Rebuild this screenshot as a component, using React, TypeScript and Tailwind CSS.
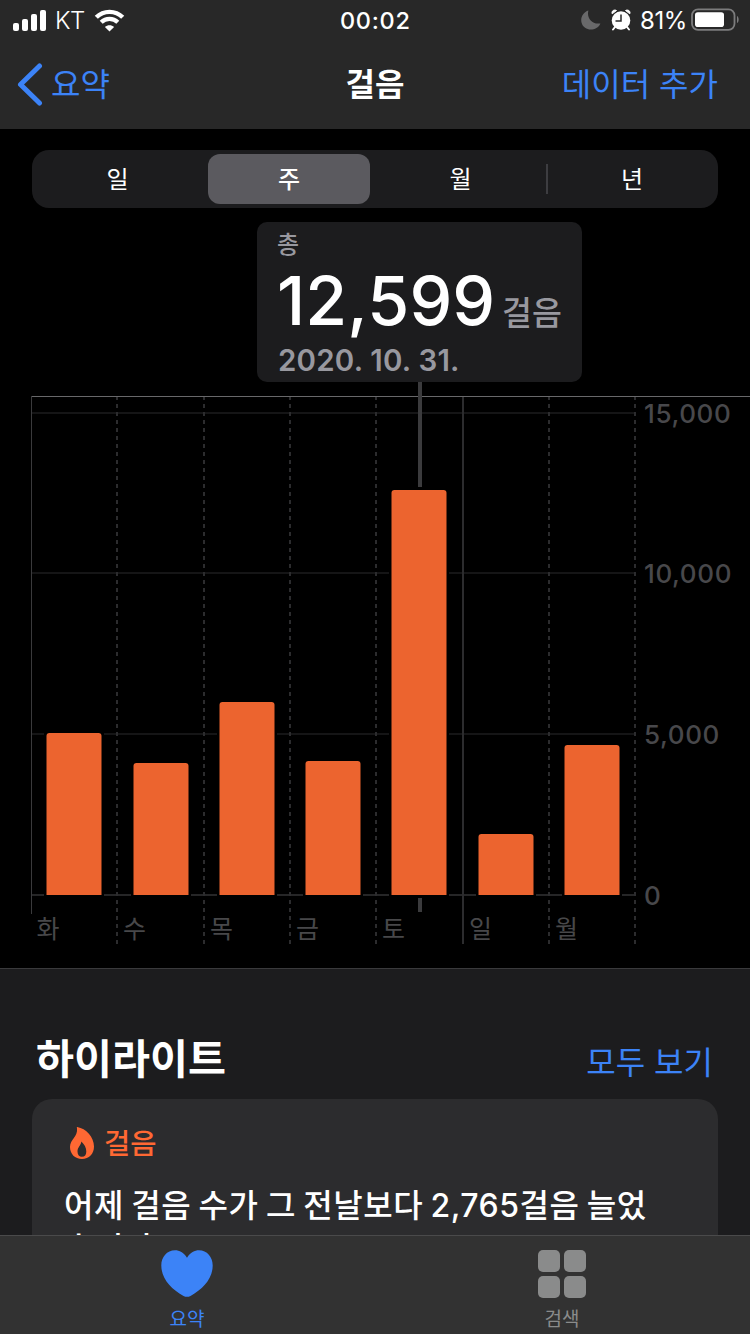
const FONT = "font-['Inter','Noto_Sans_CJK_KR',sans-serif]";

const segments = ['일', '주', '월', '년'];

const bars = [
  { x: 46, top: 733, day: '화', labelX: 36.5 },
  { x: 133, top: 763, day: '수', labelX: 123 },
  { x: 219, top: 702, day: '목', labelX: 210 },
  { x: 305, top: 761, day: '금', labelX: 296 },
  { x: 391, top: 490, day: '토', labelX: 382 },
  { x: 478, top: 834, day: '일', labelX: 469 },
  { x: 564, top: 745, day: '월', labelX: 555 },
];

const gridLines = [
  { y: 413, label: '15,000' },
  { y: 573, label: '10,000' },
  { y: 734, label: '5,000' },
  { y: 895, label: '0' },
];

const AXIS_BOTTOM = 895;

function StatusBar() {
  return (
    <div className="flex h-10 items-center pl-[13px] pr-[11px] text-white">
      <svg width="34" height="22" viewBox="0 0 34 22" fill="currentColor">
        <rect x="0" y="14" width="6" height="8" rx="2" />
        <rect x="9" y="10" width="6" height="12" rx="2" />
        <rect x="18" y="5" width="6" height="17" rx="2" />
        <rect x="27" y="1" width="6" height="21" rx="2" />
      </svg>
      <span className="ml-[8px] w-[29px] pt-px text-[24px] leading-[44px] font-[350] tracking-[-0.5px]">KT</span>
      <svg className="ml-[10px]" width="31" height="23" viewBox="0 0 31 23" fill="none" stroke="currentColor">
        <path d="M2.300 8.300C9.600 1 21.400 1 28.700 8.300" strokeWidth="4.400" />
        <path d="M7.200 13.300c4.600-4.600 12-4.600 16.600 0" strokeWidth="4.200" />
        <path d="M15.500 22.500l-4.600-4.500c2.600-2.400 6.600-2.400 9.200 0z" fill="currentColor" stroke="none" />
      </svg>
      <span className="ml-[215px] w-[72px] pt-px text-[23.5px] leading-[44px] font-medium tracking-[0.7px]">00:02</span>
      <div className="ml-auto flex items-center">
        <svg width="20" height="20" viewBox="0 0 20 20" fill="#69696a">
          <path d="M7.400 0.400C5.500 7.500 10.500 14.800 19.400 13.400 16 21.500 3 22 .5 12.500-.8 7 2.500 2 7.400.4z" />
        </svg>
        <svg className="ml-[10px]" width="20" height="22" viewBox="0 0 20 22">
          <path d="M1.200 4.800C.2 2 3 .2 5.500 1.500zM18.800 4.800C19.800 2 17 .2 14.500 1.500z" fill="#fff" stroke="#fff" strokeLinejoin="round" />
          <path d="M4 18l-2 2.500M16 18l2 2.500" stroke="#fff" strokeWidth="2" strokeLinecap="round" />
          <circle cx="10" cy="11.500" r="9.300" fill="#fff" />
          <path d="M10 5.500v6.500H4.500" fill="none" stroke="#282828" strokeWidth="1.500" />
        </svg>
        <span className="ml-[9px] w-[49px] pt-px text-[24px] leading-[44px] tracking-[-0.400px] whitespace-nowrap">81%</span>
        <svg className="ml-[2px]" width="48" height="24" viewBox="0 0 48 24">
          <rect x="1" y="1.300" width="42.500" height="20.500" rx="6" fill="none" stroke="#7c7c7d" strokeWidth="1.800" />
          <rect x="4" y="4.300" width="29" height="14.700" rx="2.800" fill="#fff" />
          <path d="M46 8c2.200 1 2.200 6 0 7z" fill="#7c7c7d" />
        </svg>
      </div>
    </div>
  );
}

function NavBar() {
  return (
    <div className="grid h-[89px] grid-cols-3 items-center px-4 text-[32px] leading-[87px] text-[#3c83f7]">
      <div className="flex items-center">
        <svg width="28" height="44" viewBox="0 0 28 44" fill="none" stroke="currentColor" strokeWidth="5" strokeLinecap="round" strokeLinejoin="round">
          <path d="M23.500 3L4.500 21.500l19 18.500" />
        </svg>
        <span className="ml-[7px] pb-[2px]">요약</span>
      </div>
      <h1 className="text-center leading-[90px] font-semibold text-white">걸음</h1>
      <span className="pr-[16px] pb-[2px] text-right whitespace-nowrap">데이터 추가</span>
    </div>
  );
}

function SegmentedControl() {
  return (
    <div className="mx-8 mt-[21px] flex h-[58px] items-center rounded-[17px] bg-[#1c1c1e] text-[24px] text-white">
      {segments.map((label, i) => (
        <div key={label} className="flex h-[50px] flex-1 items-center">
          {i === 3 && <div className="-mr-px -ml-px h-[30px] w-[2px] bg-[#3d3d41]" />}
          <div
            className={`mr-[5px] ml-[4.500px] h-[50px] flex-1 rounded-[12px] text-center leading-[52px] ${
              i === 1 ? 'bg-[#5b5a5f] font-medium' : ''
            }`}
          >
            {label}
          </div>
        </div>
      ))}
    </div>
  );
}

function SelectionCard() {
  return (
    <div className="mt-[14px] ml-[257px] flex h-[160px] w-[325px] flex-col rounded-[10px] bg-[#1c1c1e] pl-5 text-[#98989f]">
      <span className="h-[44px] text-[24px] leading-[46px] font-medium">총</span>
      <div className="flex h-[70px] items-baseline whitespace-nowrap">
        <span className="w-[225px] text-[68px] leading-[68px] font-medium tracking-[0.100px] text-white">12,599</span>
        <span className="text-[32.500px] leading-[68px] font-medium">걸음</span>
      </div>
      <span className="h-[46px] pl-px text-[29.500px] leading-[49px] font-semibold tracking-[0.200px]">2020. 10. 31.</span>
    </div>
  );
}

function StepsChart() {
  return (
    <svg className="block" width="750" height="586" viewBox="0 382 750 586">
      {gridLines.map((g) => (
        <rect key={g.y} x="32" y={g.y - 1} width="604" height="2" fill={g.y === AXIS_BOTTOM ? '#262627' : '#151516'} />
      ))}
      {[117, 204, 290, 376, 549, 635].map((x) => (
        <path key={x} d={`M${x} 396V944`} stroke="#2c2c2e" strokeWidth="2" strokeDasharray="4 4" />
      ))}
      <rect x="462" y="396" width="2" height="548" fill="#2c2c2e" />
      <rect x="31" y="396" width="1" height="518" fill="#3a3a3c" />
      <rect x="32" y="396" width="718" height="1" fill="#68686a" />
      <rect x="418" y="382" width="4" height="105" fill="#3b3b3d" />
      <rect x="418" y="898" width="4" height="14" fill="#3b3b3d" />
      {bars.map((b) => (
        <g key={b.x}>
          <rect x={b.x - 2} y={b.top - 2} width="60" height={AXIS_BOTTOM - b.top + 3} fill="#000" />
          <path
            d={`M${b.x + 0.5} ${AXIS_BOTTOM}V${b.top + 3}q0-3 3-3h49q3 0 3 3V${AXIS_BOTTOM}z`}
            fill="#ec642f"
          />
          <text x={b.labelX} y="938" fontSize="25" fill="#48484a">
            {b.day}
          </text>
        </g>
      ))}
      {gridLines.map((g) => (
        <text key={g.label} x="644" y={g.y + 10} fontSize="26" fontWeight="450" letterSpacing="0.600" fill="#48484b">
          {g.label}
        </text>
      ))}
    </svg>
  );
}

function Highlights() {
  return (
    <section className="h-[366px] border-t border-[#3a3a3c] bg-[#1c1c1e] px-8">
      <div className="flex h-[130px] items-end justify-between pr-[5px] pl-1">
        <h2 className="text-[41.300px] leading-[80px] font-semibold text-white">하이라이트</h2>
        <span className="text-[32px] leading-[72px] text-[#3c83f7]">모두 보기</span>
      </div>
      <div className="h-[235px] rounded-t-[20px] bg-[#2c2c2e] px-8 pt-5">
        <div className="flex h-[48px] items-center text-[#ff6833]">
          <svg className="ml-[5px]" width="26" height="34" viewBox="0 0 26 34">
            <path
              fillRule="evenodd"
              fill="currentColor"
              d="M8.300 1c8.700 1.500 16.700 10 16.700 19.500 0 7.500-5 12.500-12 12.500S1 28 1 21C1 13.500 9 10.500 8 2.500 7.900 1.500 7.500 1 8.300 1zM12.300 15.500c-.2 4-3.800 5.500-3.800 10 0 3.400 1.800 5.300 4.300 5.300 3 0 4.500-1.900 4.500-5.300 0-3.800-2-7.300-5-10z"
            />
          </svg>
          <span className="ml-[9px] pt-[2px] text-[28.500px] font-medium">걸음</span>
        </div>
        <p className="mt-[17px] text-[32px] leading-[43px] font-medium tracking-[0.500px] [word-spacing:-1.600px] whitespace-nowrap text-white">
          어제 걸음 수가 그 전날보다 2,765걸음 늘었
          <br />
          습니다.
        </p>
      </div>
    </section>
  );
}

function TabBar() {
  return (
    <nav className="absolute inset-x-0 bottom-0 grid h-[99px] grid-cols-2 border-t border-[#4a4a4b] bg-[#323232] text-[19px]">
      <div className="flex flex-col items-center pr-px pt-[14px] text-[#3c83f7]">
        <svg width="52" height="48" viewBox="0 0 52 48" fill="currentColor">
          <path d="M26 7.700C22.500 2.500 18.500.3 14 .3 6 .3.3 7 .3 15.500.3 28.500 10 39 22.500 46q3.500 1.700 7 0C42 39 51.700 28.500 51.700 15.500 51.700 7 46 .3 38 .3c-4.500 0-8.500 2.200-12 7.400z" />
        </svg>
        <span className="mt-[8px] leading-[28px]">요약</span>
      </div>
      <div className="flex flex-col items-center pr-px pt-[14px] text-[#8a8b8b]">
        <svg width="48" height="48" viewBox="0 0 48 48" fill="currentColor">
          <rect width="22" height="22" rx="5" />
          <rect x="26" width="22" height="22" rx="5" />
          <rect y="26" width="22" height="22" rx="5" />
          <rect x="26" y="26" width="22" height="22" rx="5" />
        </svg>
        <span className="mt-[8px] leading-[28px]">검색</span>
      </div>
    </nav>
  );
}

export default function App() {
  return (
    <div lang="ko" className={`relative h-[1334px] w-[750px] overflow-hidden bg-black antialiased ${FONT}`}>
      <header className="h-[129px] bg-[#282828]">
        <StatusBar />
        <NavBar />
      </header>
      <SegmentedControl />
      <SelectionCard />
      <StepsChart />
      <Highlights />
      <TabBar />
    </div>
  );
}
